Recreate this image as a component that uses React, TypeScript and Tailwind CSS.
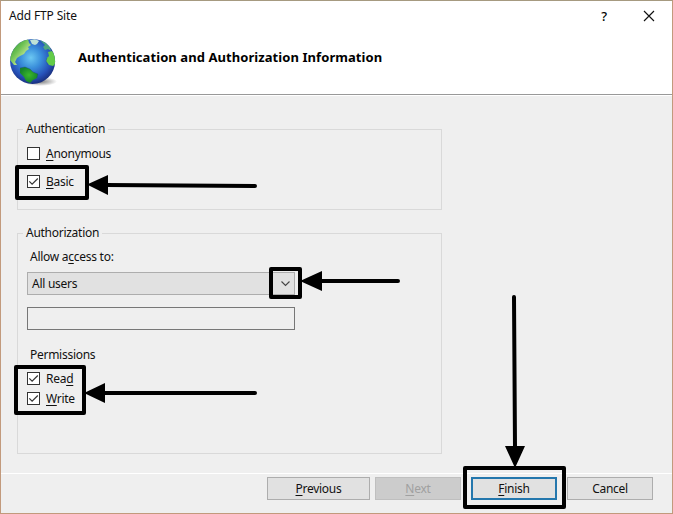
import type { ReactNode } from "react";

function Key({ children }: { children: ReactNode }) {
  return <span className="underline decoration-1 underline-offset-[2px]">{children}</span>;
}

function Check({ checked, children }: { checked?: boolean; children: ReactNode }) {
  return (
    <label className="flex h-[15px] items-center gap-1.5">
      <span className="flex size-[13px] shrink-0 items-center justify-center border border-[#333] bg-white">
        {checked && (
          <svg width="11" height="11" viewBox="0 0 11 11" fill="none" stroke="#333" strokeWidth="1.2">
            <path d="M1.3 5.4 4.1 8.2 9.8 2.5" />
          </svg>
        )}
      </span>
      <span className="leading-[15px]">{children}</span>
    </label>
  );
}

function Globe() {
  return (
    <svg className="mt-[8px] ml-[7px] shrink-0" width="50" height="50" viewBox="0 0 50 50">
      <defs>
        <radialGradient id="sea" cx="46%" cy="42%" r="60%">
          <stop offset="0" stopColor="#6cc8f2" />
          <stop offset=".38" stopColor="#3a8fdb" />
          <stop offset=".75" stopColor="#2650b8" />
          <stop offset="1" stopColor="#182c78" />
        </radialGradient>
        <linearGradient id="land" x1="0" y1="0" x2="1" y2="1">
          <stop offset="0" stopColor="#23883a" />
          <stop offset=".4" stopColor="#6cc152" />
          <stop offset=".65" stopColor="#b4e08a" />
          <stop offset="1" stopColor="#4aae52" />
        </linearGradient>
        <radialGradient id="south">
          <stop offset="0" stopColor="#3cb82c" />
          <stop offset="1" stopColor="#16842c" />
        </radialGradient>
        <radialGradient id="shade">
          <stop offset="0" stopColor="#333" stopOpacity=".65" />
          <stop offset="1" stopColor="#333" stopOpacity="0" />
        </radialGradient>
        <clipPath id="disc"><circle cx="24.6" cy="23.4" r="22.5" /></clipPath>
      </defs>
      <ellipse cx="32" cy="43.5" rx="17" ry="4.5" fill="url(#shade)" />
      <circle cx="24.6" cy="23.4" r="22.5" fill="url(#sea)" />
      <g clipPath="url(#disc)">
        <path fill="url(#land)" d="M7 7 14 2 20 1 21 5 23 7 20 9 21 11 18 13 16 16 12 18 9 20 8 22 7 24 9 27 6 27 2 22 2 14Z" />
        <path fill="#bfe3d6" d="M22 2 27 1 31 3 29 6 27 7 24 6Z" />
        <path fill="#4fa780" d="M32 2 37 4 42 9 43 13 40 11 37 12 35 9 37 7Z" />
        <path fill="#64cb48" d="M40 14 44 13 48 19 48 25 45 28 41 27 38 23 39 20 41 18Z" />
        <path fill="url(#south)" d="M12 30 17 29 22 31 25 34 30 36 29 40 25 42 22 45 18 43 16 39 12 35Z" />
        <path fill="none" stroke="#1a3f91" strokeWidth=".7" opacity=".5" d="m12 30 5-1 5 2 3 3 5 2-1 4M40 27l-2-4 1-3" />
      </g>
    </svg>
  );
}

function Button({ className, children }: { className: string; children: ReactNode }) {
  return (
    <button className={`flex h-[23px] shrink-0 items-center justify-center pt-px ${className}`}>
      <span>{children}</span>
    </button>
  );
}

function Annotations() {
  return (
    <svg className="pointer-events-none absolute inset-0" width="673" height="514" viewBox="0 0 673 514">
      <g fill="none" stroke="#000" strokeWidth="4" strokeLinejoin="round" strokeLinecap="round">
        <rect x="17" y="167" width="70" height="31" />
        <rect x="271" y="269" width="29" height="28" />
        <rect x="16" y="367" width="68" height="46" />
        <rect x="465" y="468" width="99" height="39" />
        <path d="M106 185 255 186M320 281H398M103 393H255M514 297 515 448" />
      </g>
      <path d="M87 184.500 108 175V195ZM300 281 322 271V291ZM84 393 105 383V403ZM505 446H525L515 468Z" />
    </svg>
  );
}

export default function App() {
  return (
    <div className="relative flex h-[514px] w-[673px] flex-col overflow-hidden border border-[#c29a7c] border-t-[#a69a80] bg-[#efefef] font-['Noto_Sans','Open_Sans',sans-serif] text-[12px] leading-4 tracking-[-0.27px] text-[#111]">
      <div className="flex h-[29px] shrink-0 items-center bg-white pl-2">
        <span className="tracking-[-0.15px]">Add FTP Site</span>
        <span className="mr-[32px] ml-auto w-3 text-center text-[13px] font-medium text-black">?</span>
        <svg className="mr-[16px]" width="14" height="14" viewBox="0 0 14 14" stroke="#111" strokeWidth="1.15"><path d="m2 2 10 10M12 2 2 12" /></svg>
      </div>
      <header className="flex h-16 shrink-0 bg-white">
        <Globe />
        <h1 className="mt-[19px] ml-5 text-[13px] font-bold tracking-[0.07px] whitespace-nowrap text-black">Authentication and Authorization Information</h1>
      </header>
      <div className="h-[2px] shrink-0 border-t border-[#999] bg-white" />
      <main className="flex-1 pt-[25px] pl-4">
        <fieldset className="h-[89px] w-[425px] border border-[#d9d9d9] px-[9px]">
          <legend className="-ml-1 h-4 px-[3px]">Authentication</legend>
          <div className="flex flex-col gap-[13px] pt-[9px]">
            <Check checked={false}><Key>A</Key>nonymous</Check>
            <Check checked><Key>B</Key>asic</Check>
          </div>
        </fieldset>
        <fieldset className="mt-[15px] h-[229px] w-[425px] border border-[#d9d9d9] px-[9px]">
          <legend className="-ml-1 h-4 px-[3px]">Authorization</legend>
          <p className="mt-2 ml-[3px]">Allow a<Key>c</Key>cess to:</p>
          <div className="mt-[7px] flex h-[23px] w-[268px] items-center justify-between border border-[#adadad] bg-[#e1e1e1] pr-[3px] pl-1">
            <span className="pt-px">All users</span>
            <svg width="11" height="7" viewBox="0 0 11 7" fill="none" stroke="#444" strokeWidth="1.1"><path d="m1.500 1.500 4 4 4-4" /></svg>
          </div>
          <div className="mt-3 h-[23px] w-[268px] border border-[#777]" />
          <p className="mt-[17px] ml-[3px]">Permissions</p>
          <div className="mt-2 flex flex-col gap-[5px]">
            <Check checked>Rea<Key>d</Key></Check>
            <Check checked><Key>W</Key>rite</Check>
          </div>
        </fieldset>
      </main>
      <footer className="flex h-10 shrink-0 items-start border-t border-white pt-[3px] pl-[266px]">
        <Button className="w-[103px] border border-[#adadad] bg-[#e1e1e1]"><Key>P</Key>revious</Button>
        <Button className="ml-[5px] w-[86px] border border-[#bfbfbf] bg-[#ccc] text-[#a0a0a0]"><Key>N</Key>ext</Button>
        <Button className="ml-[10px] w-[86px] border-2 border-[#2477ad] bg-[#e1e1e1]"><Key>F</Key>inish</Button>
        <Button className="ml-[10px] w-[86px] border border-[#adadad] bg-[#e1e1e1]">Cancel</Button>
      </footer>
      <div className="absolute -top-px -left-px"><Annotations /></div>
    </div>
  );
}
